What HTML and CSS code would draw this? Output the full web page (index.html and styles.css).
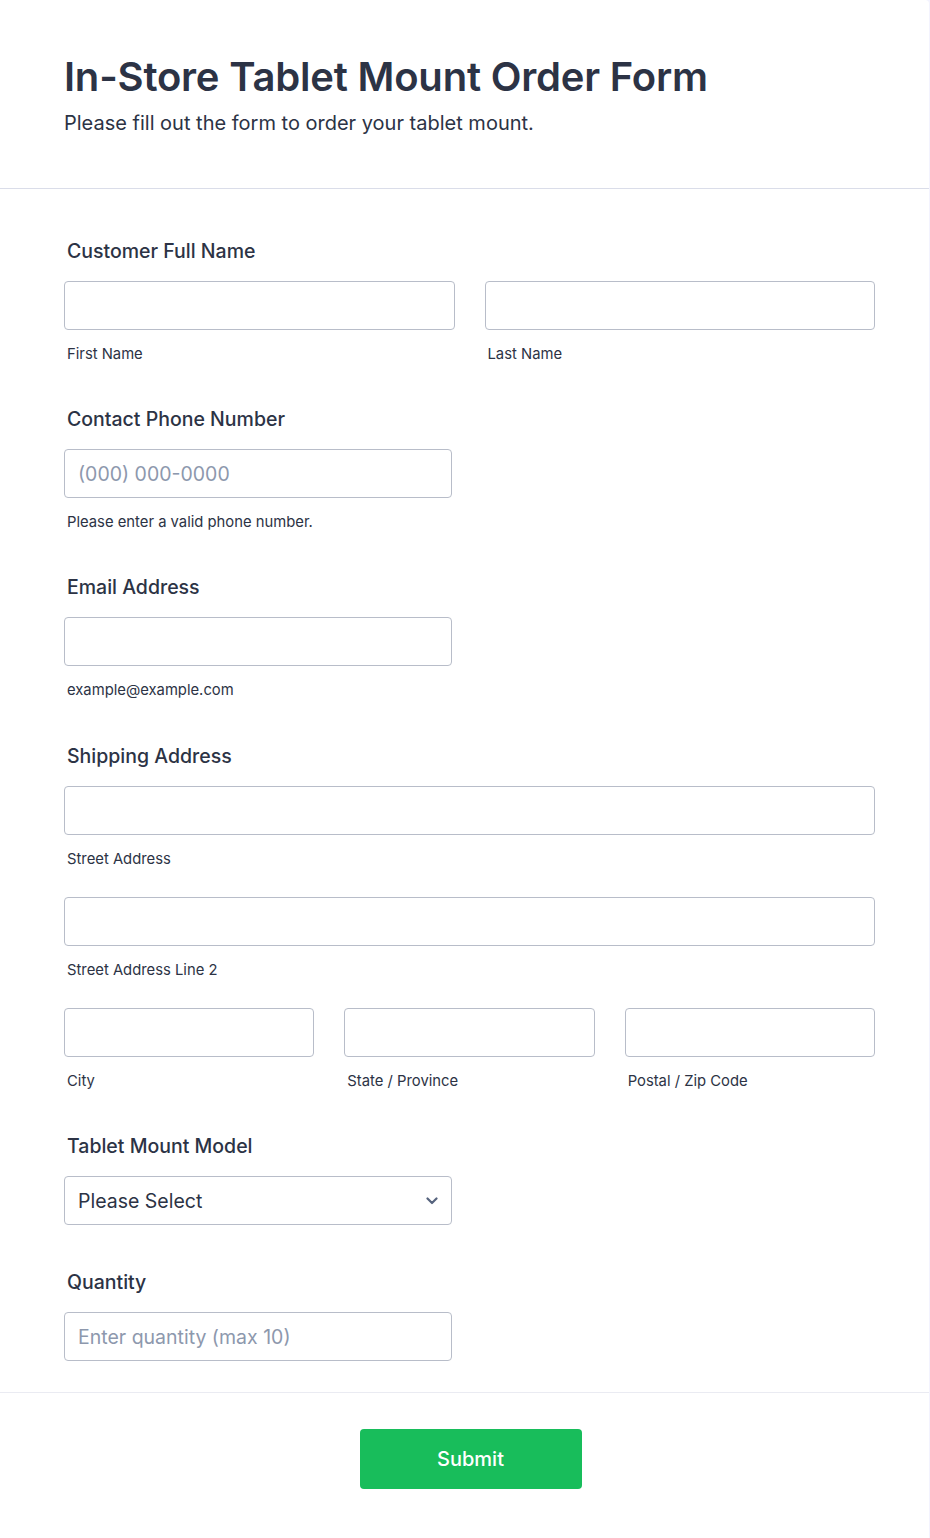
FILE: index.html
```html
<!DOCTYPE html>
<html lang="en">
<head>
    <meta charset="UTF-8">
    <meta name="viewport" content="width=device-width, initial-scale=1.0">
    <title>In-Store Tablet Mount Order Form</title>
    <link rel="stylesheet" href="styles.css">
</head>
<body>

<div class="card">
    <div class="header">
        <h1>In-Store Tablet Mount Order Form</h1>
        <p class="subtitle">Please fill out the form to order your tablet mount.</p>
    </div>

    <form class="form-body" onsubmit="return false">
        <div class="field">
            <div class="label">Customer Full Name</div>
            <div class="row two">
                <div class="part">
                    <input type="text" id="firstName" class="input">
                    <label class="sub" for="firstName">First Name</label>
                </div>
                <div class="part">
                    <input type="text" id="lastName" class="input">
                    <label class="sub" for="lastName">Last Name</label>
                </div>
            </div>
        </div>

        <div class="field">
            <label class="label" for="phone">Contact Phone Number</label>
            <input type="tel" id="phone" class="input short" placeholder="(000) 000-0000">
            <div class="sub">Please enter a valid phone number.</div>
        </div>

        <div class="field wide-gap">
            <label class="label" for="email">Email Address</label>
            <input type="email" id="email" class="input short">
            <div class="sub">example@example.com</div>
        </div>

        <div class="field">
            <div class="label">Shipping Address</div>
            <div class="part">
                <input type="text" id="street1" class="input">
                <label class="sub" for="street1">Street Address</label>
            </div>
            <div class="part next">
                <input type="text" id="street2" class="input">
                <label class="sub" for="street2">Street Address Line 2</label>
            </div>
            <div class="row three next">
                <div class="part">
                    <input type="text" id="city" class="input">
                    <label class="sub" for="city">City</label>
                </div>
                <div class="part">
                    <input type="text" id="state" class="input">
                    <label class="sub" for="state">State / Province</label>
                </div>
                <div class="part">
                    <input type="text" id="zip" class="input">
                    <label class="sub" for="zip">Postal / Zip Code</label>
                </div>
            </div>
        </div>

        <div class="field plain">
            <label class="label" for="model">Tablet Mount Model</label>
            <div class="select-wrap short">
                <select id="model" class="input select">
                    <option>Please Select</option>
                    <option>Floor Stand Mount</option>
                    <option>Countertop Mount</option>
                    <option>Wall Mount</option>
                </select>
                <svg class="chevron" width="12" height="8" viewBox="0 0 12 8">
                    <path d="M1.5 1.5 L6 6 L10.5 1.5" fill="none" stroke="#57647e" stroke-width="2.2" stroke-linecap="round" stroke-linejoin="round"/>
                </svg>
            </div>
        </div>

        <div class="field last">
            <label class="label" for="qty">Quantity</label>
            <input type="number" id="qty" class="input short" placeholder="Enter quantity (max 10)" min="1" max="10">
        </div>
    </form>

    <div class="footer">
        <button class="submit" type="button">Submit</button>
    </div>
</div>

</body>
</html>
```

FILE: styles.css
```css
body {
    margin: 0;
    background-color: #f3f3fe;
    font-family: Inter, "Noto Sans", sans-serif;
    color: #2c3345;
}
.card {
    width: 929px;
    min-height: 1538px;
    background-color: #fff;
    border-radius: 0 4px 0 0;
}
.header {
    padding: 53px 64px 53px;
    border-bottom: 1px solid #dadde9;
}
h1 {
    margin: 0;
    font-size: 40px;
    line-height: 48px;
    font-weight: 600;
    letter-spacing: -0.2px;
}
.subtitle {
    margin: 10px 0 0;
    font-size: 20px;
    line-height: 24px;
}
.form-body {
    padding: 50px 54px 31px 64px;
    border-bottom: 1px solid #eaebf2;
}
.field {
    margin-bottom: 43px;
}
.field.wide-gap {
    margin-bottom: 44px;
}
.field.plain {
    margin-bottom: 45px;
}
.field.last {
    margin-bottom: 0;
}
.label {
    display: block;
    margin: 0 0 18px 3px;
    font-size: 19.5px;
    line-height: 24px;
    font-weight: 500;
}
.input {
    box-sizing: border-box;
    display: block;
    width: 100%;
    height: 49px;
    padding: 0 13px;
    border: 1px solid #b8bdc9;
    border-radius: 4px;
    background-color: #fff;
    font-family: inherit;
    font-size: 19.5px;
    color: #2c3345;
    outline: none;
}
.input::placeholder {
    color: #8d98ad;
}
.short {
    width: 388px;
}
.sub {
    display: block;
    margin: 14px 0 0 3px;
    font-size: 14.8px;
    line-height: 20px;
    color: #2c3345;
}
.row {
    display: grid;
    column-gap: 30px;
}
.row.two {
    grid-template-columns: 1fr 1fr;
}
.row.three {
    grid-template-columns: 1fr 1fr 1fr;
}
.next {
    margin-top: 28px;
}
.select-wrap {
    position: relative;
}
.select {
    appearance: none;
    -webkit-appearance: none;
    width: 100%;
}
.chevron {
    position: absolute;
    right: 14px;
    top: 21px;
    pointer-events: none;
}
input[type=number]::-webkit-inner-spin-button,
input[type=number]::-webkit-outer-spin-button {
    -webkit-appearance: none;
    margin: 0;
}
.footer {
    padding: 36px 0 0 12px;
    text-align: center;
}
.submit {
    width: 222px;
    height: 60px;
    border: none;
    border-radius: 4px;
    background-color: #18bd5b;
    color: #fff;
    font-family: inherit;
    font-size: 20px;
    font-weight: 500;
    cursor: pointer;
}
.submit:hover {
    background-color: #16aa52;
}
```
